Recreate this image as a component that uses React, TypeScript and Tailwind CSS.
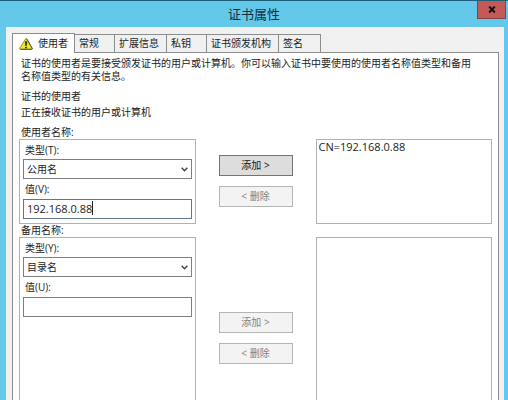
import { useState } from "react";
import clsx from "clsx";

const tabs = [
  { label: "常规", width: "w-10" },
  { label: "扩展信息", width: "w-[52px]" },
  { label: "私钥", width: "w-10" },
  { label: "证书颁发机构", width: "w-[72px]" },
  { label: "签名", width: "w-[42px]" },
];

function WarningIcon() {
  return (
    <svg className="h-3 w-3.5 shrink-0" viewBox="0 0 14 12" aria-hidden="true">
      <path
        d="M6.6 .7 .7 10.3Q.5 11.2 1.4 11.3H12.6Q13.5 11.2 13.2 10.3L7.6 .7Q7.1 .2 6.6 .7Z"
        fill="#f0e52c"
        stroke="#8a852a"
        strokeWidth="0.8"
      />
      <path d="M7.6 .7 13.2 10.3Q13.5 11.2 12.6 11.3H1.4" fill="none" stroke="#4a4826" strokeWidth="0.9" />
      <path d="M6.2 3.6H7.9L7.5 7.8H6.6Z" fill="#1c1b08" stroke="#1c1b08" strokeWidth="0.4" />
      <circle cx="7" cy="9.6" r="0.9" fill="#1c1b08" />
    </svg>
  );
}

function ActionButton({ children, disabled }: { children: string; disabled?: boolean }) {
  return (
    <button
      type="button"
      disabled={disabled}
      className={clsx(
        "h-[21px] w-full whitespace-pre border text-center",
        disabled
          ? "border-[#b4b6b6] bg-[#f3f3f3] text-[#828282]"
          : "border-[#747474] bg-[#dddddd] text-[#111111]"
      )}
    >
      {children}
    </button>
  );
}

type NameFieldsProps = {
  id: string;
  typeKey: string;
  valueKey: string;
  options: string[];
  initial: string;
  active?: boolean;
};

function NameFields({ id, typeKey, valueKey, options, initial, active }: NameFieldsProps) {
  const [value, setValue] = useState(initial);

  return (
    <div className="min-w-0 border border-[#b0b2b2] px-[3px] pt-1 pb-1">
      <label htmlFor={`${id}-type`} className="mb-0.5 block pl-0.5">
        类型({typeKey}):
      </label>
      <div className="relative mb-1">
        <select
          id={`${id}-type`}
          className="block h-5 w-full appearance-none border border-[#7b8084] bg-white pl-[3px] outline-none"
        >
          {options.map((option) => (
            <option key={option}>{option}</option>
          ))}
        </select>
        <svg
          className="pointer-events-none absolute top-2 right-1 h-[5px] w-[7px]"
          viewBox="0 0 7 5"
          aria-hidden="true"
        >
          <path d="M.7 .8 3.5 3.7 6.3 .8" fill="none" stroke="#444444" strokeWidth="1.5" />
        </svg>
      </div>
      <label htmlFor={`${id}-value`} className="mb-[3px] block pl-0.5">
        值({valueKey}):
      </label>
      <div className="relative">
        <input
          id={`${id}-value`}
          type="text"
          value={value}
          onChange={(e) => setValue(e.target.value)}
          className={clsx(
            "block h-5 w-full border bg-white pb-0.5 pl-[3px] text-[11px] outline-none",
            active ? "border-[#62788a]" : "border-[#7b8084]"
          )}
        />
        {active && (
          <div className="pointer-events-none absolute top-0.5 left-1 flex h-3.5 text-[11px]">
            <span className="invisible" aria-hidden="true">{value}</span>
            <span className="h-full w-px bg-[#222222]" />
          </div>
        )}
      </div>
    </div>
  );
}

export default function App() {
  return (
    <div className="flex h-screen flex-col overflow-hidden border-t border-[#1d6079] bg-[#64c8ea] font-['Open_Sans','Noto_Sans_CJK_SC',sans-serif] text-[10px] leading-[13px] text-[#222222]">
      <header className="relative flex h-[26px] shrink-0 items-center justify-center">
        <h1 className="text-[13px] leading-5 text-[#123140]">证书属性</h1>
        <button
          type="button"
          aria-label="关闭"
          className="absolute top-0 right-0.5 flex h-[18px] w-[29px] items-center justify-center border border-t-0 border-[#7e4544] bg-[#c45a57]"
        >
          <svg className="h-[7px] w-2" viewBox="0 0 8 7" aria-hidden="true">
            <path d="M1.2 .5 6.8 6.5M6.8 .5 1.2 6.5" stroke="#1c1112" strokeWidth="2" />
          </svg>
        </button>
      </header>

      <main className="mr-1 ml-1.5 flex-1 bg-[#f0f0f0] pr-[5px] pl-1.5">
        <nav className="flex h-[26px] items-end border-b border-[#8b8d8f]">
          <button
            type="button"
            className="-mb-px flex h-5 w-[63px] items-center gap-[5px] border border-b-0 border-[#8b8d8f] bg-white pl-1.5 whitespace-nowrap"
          >
            <WarningIcon />
            使用者
          </button>
          {tabs.map((tab) => (
            <button
              key={tab.label}
              type="button"
              className={clsx(
                "h-[18px] border-t border-r border-[#8b8d8f] bg-[#f0f0f0] pl-1 text-left whitespace-nowrap",
                tab.width
              )}
            >
              {tab.label}
            </button>
          ))}
        </nav>

        <div className="border-x border-[#8b8d8f] bg-white px-1.5 pt-1">
          <p className="mb-[7px] px-0.5">
            证书的使用者是要接受颁发证书的用户或计算机。你可以输入证书中要使用的使用者名称值类型和备用
            <br />
            名称值类型的有关信息。
          </p>
          <h2 className="mb-[3px] pl-0.5">证书的使用者</h2>
          <p className="mb-[7px] pl-0.5">正在接收证书的用户或计算机</p>

          <h3 className="pl-0.5">使用者名称:</h3>
          <section className="grid grid-cols-[1fr_74px_1fr] gap-[23px]">
            <NameFields
              id="subject"
              typeKey="T"
              valueKey="V"
              options={["公用名"]}
              initial="192.168.0.88"
              active
            />
            <div className="flex flex-col gap-2.5 pt-4">
              <ActionButton>{"添加 >"}</ActionButton>
              <ActionButton disabled>{"< 删除"}</ActionButton>
            </div>
            <ul className="min-w-0 border border-[#b0b2b2] px-0.5 text-[11px]">
              <li>CN=192.168.0.88</li>
            </ul>
          </section>

          <h3 className="pl-0.5">备用名称:</h3>
          <section className="grid min-h-[184px] grid-cols-[1fr_74px_1fr] gap-[23px]">
            <NameFields
              id="alternative"
              typeKey="Y"
              valueKey="U"
              options={["目录名"]}
              initial=""
            />
            <div className="flex flex-col gap-2.5 pt-[75px]">
              <ActionButton disabled>{"添加 >"}</ActionButton>
              <ActionButton disabled>{"< 删除"}</ActionButton>
            </div>
            <ul className="min-w-0 border border-[#b0b2b2]" />
          </section>
        </div>
      </main>
    </div>
  );
}
